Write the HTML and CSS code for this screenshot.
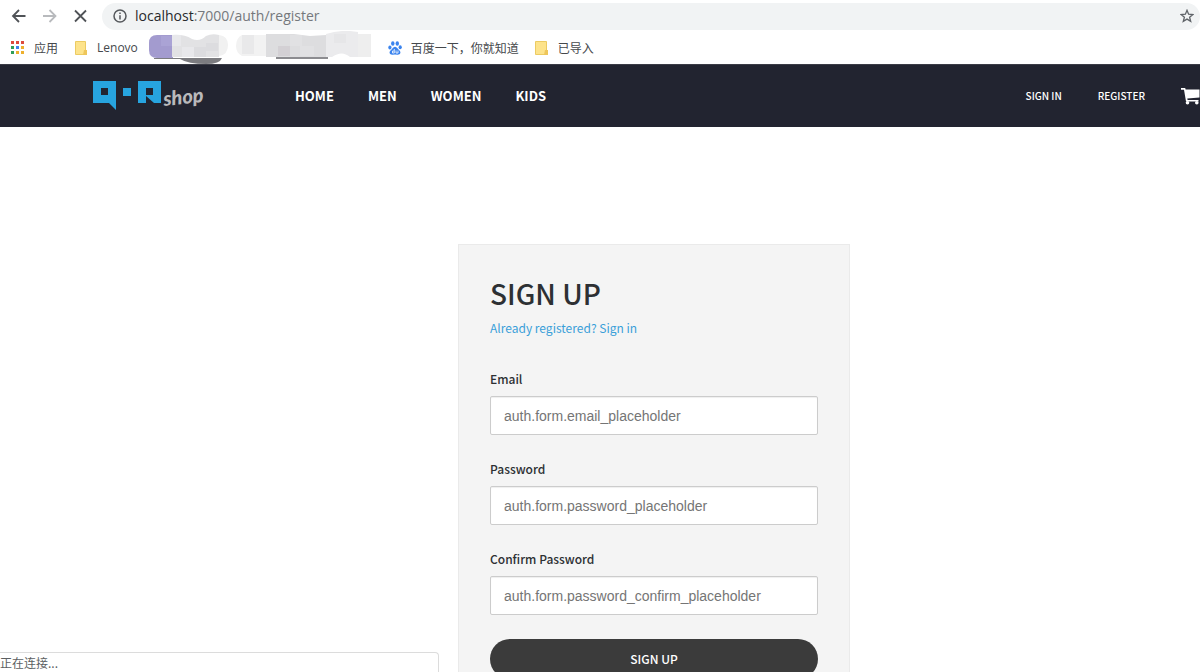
FILE: index.html
```html
<!DOCTYPE html>
<html lang="en">
<head>
  <meta charset="UTF-8">
  <meta content="width=device-width, initial-scale=1.0" name="viewport">
  <title>Sign up</title>
  <link rel="stylesheet" href="styles.css">
</head>
<body>
<div class="browser">
  <div class="toolbar">
    <button type="button" class="tool" aria-label="Back">
      <svg width="16" height="16" viewBox="0 0 16 16" fill="none" stroke="#505357" stroke-width="1.800"><path d="M14.500 8H2M8 2L2 8L8 14"/></svg>
    </button>
    <button type="button" class="tool" aria-label="Forward">
      <svg width="16" height="16" viewBox="0 0 16 16" fill="none" stroke="#b8babd" stroke-width="1.800"><path d="M1 8H13.500M7.500 2L13.500 8L7.500 14"/></svg>
    </button>
    <button type="button" class="tool" aria-label="Stop">
      <svg width="16" height="16" viewBox="0 0 16 16" fill="none" stroke="#505357" stroke-width="1.800"><path d="M2 2.500L13 13.500M13 2.500L2 13.500"/></svg>
    </button>
    <div class="address">
      <svg width="14" height="14" viewBox="0 0 14 14" fill="none" stroke="#55585c" stroke-width="1.500"><circle cx="7" cy="7" r="6"/><path d="M7 6.200V10.500M7 3.500V5"/></svg>
      <span class="url"><b>localhost</b>:7000/auth/register</span>
      <svg class="star" width="14" height="14" viewBox="0 0 14 14" fill="none" stroke="#5f6368" stroke-width="1.300"><path d="M7 1.300L8.600 5.200L12.900 5.500L9.600 8.200L10.700 12.400L7 10.100L3.300 12.400L4.400 8.200L1.100 5.500L5.400 5.200Z"/></svg>
    </div>
  </div>
  <div class="bookmarks">
    <a class="bookmark" href="#">
      <svg width="14" height="14" viewBox="0 0 14 14">
        <path fill="#dd4b3e" d="M0 0h3v3H0zM5 0h3v3H5zM10 0h3v3h-3z"/>
        <path fill="#2f9e58" d="M0 5h3v3H0zM0 10h3v3H0z"/>
        <path fill="#3f83ee" d="M5 5h3v3H5z"/>
        <path fill="#eeb02d" d="M10 5h3v3h-3zM5 10h3v3H5zM10 10h3v3h-3z"/>
      </svg>
      应用
    </a>
    <a class="bookmark" href="#">
      <svg width="14" height="14" viewBox="0 0 14 14"><path fill="#fde38b" stroke="#eccb62" d="M1.500 .5H11.500V9.500H12.500V13.500H1.500Z"/><path fill="#eec65a" d="M10 9h3v5H9z"/></svg>
      <span class="latin">Lenovo</span>
    </a>
    <svg class="mosaic" width="224" height="34" viewBox="148 33 224 34">
      <path fill="#7c7c80" d="M154 60H222Q220 66 206 66Q188 66 180 61H154Z"/>
      <path fill="#a39bcf" d="M157 37H173V60H157Q149 60 149 52V45Q149 37 157 37Z"/>
      <path fill="#aaa3d5" d="M161 38h11v10h-11z"/>
      <path fill="#e2e2e4" d="M172 37Q184 36 192 41Q200 44 206 38Q212 35 219 37V59H172Z"/>
      <path fill="#e8e8eb" d="M172 37h9v11h-9zM182 49h12v10h-12z"/>
      <path fill="#dcdcdf" d="M194 49h12v10h-12zM206 45h12v8h-12z"/>
      <path fill="#f1f1f1" d="M219 37Q228 38 228 47Q228 57 219 58Z"/>
      <path fill="#8c8c90" d="M276 58H328V61H276Z"/>
      <path fill="#f2f2f2" d="M242 37H266V58H242Q236 55 236 48Q236 40 242 37Z"/>
      <path fill="#e9e9ea" d="M242 37h12v11h-12zM242 48h12v8h-12z"/>
      <path fill="#dddddf" d="M266 36H294L310 38L326 37V59H266Z"/>
      <path fill="#d3d0d4" d="M278 48h12v10h-12z"/>
      <path fill="#e1e1e3" d="M290 37h12v11h-12zM300 48h14v10h-14z"/>
      <path fill="#ebebed" d="M326 36Q342 31 358 34V59H350Q342 52 332 59H326Z"/>
      <path fill="#e6e6e8" d="M334 36h12v9h-12z"/>
      <path fill="#eeeeee" d="M358 36h13v23h-13z"/>
    </svg>
    <a class="bookmark" href="#">
      <svg width="14" height="14" viewBox="0 0 14 14" fill="#3b84ee">
        <ellipse cx="4.800" cy="2.500" rx="1.700" ry="2.200"/><ellipse cx="9.300" cy="2.500" rx="1.700" ry="2.200"/>
        <ellipse cx="1.900" cy="6.400" rx="1.600" ry="2"/><ellipse cx="12.200" cy="6.200" rx="1.600" ry="2"/>
        <path d="M7 5.700C9 5.700 9.500 8 11.500 9.500C13.500 11.500 12 14 9.500 13.700Q7 13.200 4.500 13.700C2 14 .5 11.500 2.500 9.500C4.500 8 5 5.700 7 5.700Z"/>
        <path fill="none" stroke="#fff" stroke-width=".8" d="M6.300 8V12H4.500V10H6M8 9.500V12H10V9.500"/>
      </svg>
      百度一下，你就知道
    </a>
    <a class="bookmark" href="#">
      <svg width="14" height="14" viewBox="0 0 14 14"><path fill="#fde38b" stroke="#eccb62" d="M.5 .5H11.500V9.500H12.500V13.500H.5Z"/><path fill="#eec65a" d="M10 9h3v5H9z"/></svg>
      已导入
    </a>
  </div>
</div>

<header class="site-header">
  <a class="logo" href="#">
    <svg width="68" height="29" viewBox="0 0 68 29" fill="#27a4df" fill-rule="evenodd">
      <path d="M0 0H23V29L16 22H0ZM8 7V14H15V7Z"/>
      <path d="M30 7H38V15H30Z"/>
      <path d="M45 0H68V22H61L53 15V22H45ZM53 7V14H60V7Z"/>
    </svg>
    <span class="logo-name">shop</span>
  </a>
  <nav class="main-nav">
    <a href="#">HOME</a>
    <a href="#">MEN</a>
    <a href="#">WOMEN</a>
    <a href="#">KIDS</a>
  </nav>
  <nav class="user-nav">
    <a href="#">SIGN IN</a>
    <a href="#">REGISTER</a>
    <a class="cart" href="#" aria-label="Cart">
      <svg width="19" height="17" viewBox="0 0 19 17" fill="#fff"><path d="M0 0H4.200L4.600 1.500H18.500V9.500L6.300 10.500L6.600 12H17.500V13.500H5L3 1.800H0Z"/><circle cx="6.500" cy="14.800" r="1.800"/><circle cx="15.800" cy="14.800" r="1.800"/></svg>
    </a>
  </nav>
</header>

<main class="page">
  <form class="card">
    <h1>SIGN UP</h1>
    <a class="signin-link" href="#">Already registered? Sign in</a>

    <div class="field">
      <label for="email">Email</label>
      <input id="email" type="email" placeholder="auth.form.email_placeholder">
    </div>
    <div class="field">
      <label for="password">Password</label>
      <input id="password" type="password" placeholder="auth.form.password_placeholder">
    </div>
    <div class="field">
      <label for="confirm">Confirm Password</label>
      <input id="confirm" type="password" placeholder="auth.form.password_confirm_placeholder">
    </div>

    <button class="submit" type="submit">SIGN UP</button>
  </form>
</main>

<div class="status">正在连接...</div>
</body>
</html>
```
FILE: styles.css
```css
* {
  box-sizing: border-box;
}

body {
  background: #fff;
  color: #2d3033;
  font-family: "Noto Sans CJK SC", "Open Sans", sans-serif;
  margin: 0;
}

a {
  color: inherit;
  text-decoration: none;
}

svg {
  display: block;
  flex: none;
}

/* browser bars */
.toolbar {
  align-items: center;
  display: flex;
  gap: 15px;
  height: 32px;
  padding-left: 11px;
}

.tool {
  background: none;
  border: none;
  height: 16px;
  padding: 0;
  width: 16px;
}

.address {
  align-items: center;
  background: #f1f3f4;
  border-radius: 14px;
  display: flex;
  flex: 1;
  gap: 8px;
  height: 27px;
  margin-left: -2px;
  padding: 0 6px 0 11px;
}

.url {
  color: #75787c;
  flex: 1;
  font: 14px/20px "Open Sans", sans-serif;
}

.url b {
  color: #28292c;
  font-weight: 400;
}

.bookmarks {
  align-items: center;
  color: #45484c;
  display: flex;
  font-size: 12px;
  gap: 16px;
  height: 32px;
  line-height: 18px;
  padding-left: 11px;
}

.bookmark {
  align-items: center;
  display: flex;
  gap: 9px;
}

.latin {
  font-family: "Open Sans", sans-serif;
}

.mosaic {
  margin-left: -6px;
}

/* shop header */
.site-header {
  align-items: center;
  background: #222430;
  border-top: 1px solid #3b3c46;
  color: #fff;
  display: flex;
  height: 63px;
  padding-left: 93px;
}

.logo {
  display: flex;
  gap: 2px;
  width: 202px;
}

.logo-name {
  color: #b9b9bb;
  font: italic 900 20px/30px Lato, cursive;
  transform: rotate(-6deg);
}

.main-nav {
  display: flex;
  flex: 1;
  font-size: 13px;
  font-weight: 700;
  gap: 34px;
  line-height: 20px;
}

.user-nav {
  align-items: center;
  display: flex;
  font-size: 10px;
  font-weight: 500;
  gap: 36px;
  line-height: 20px;
}

/* sign up form */
.page {
  display: flex;
  justify-content: center;
  padding: 117px 0 60px 108px;
}

.card {
  background: #f4f4f4;
  border: 1px solid #eaeaea;
  padding: 28px 31px 40px;
  width: 392px;
}

h1 {
  font-size: 28px;
  font-weight: 500;
  line-height: 40px;
  margin: 0;
}

.signin-link {
  color: #3a9fd9;
  display: block;
  font-size: 12px;
  line-height: 20px;
  margin: 5px 0 31px;
}

.field {
  margin-bottom: 24px;
}

.field label {
  display: block;
  font-size: 12px;
  font-weight: 500;
  line-height: 20px;
  margin-bottom: 7px;
}

.field input {
  background: #fff;
  border: 1px solid #ccc;
  border-radius: 2px;
  box-shadow: inset 0 1px 1px #0001;
  display: block;
  font: 14px/20px "Liberation Sans", sans-serif;
  height: 39px;
  padding: 0 13px;
  width: 100%;
}

.field input::placeholder {
  color: #757575;
}

.submit {
  background: #3b3b3b;
  border: none;
  border-radius: 20px;
  color: #fff;
  display: block;
  font: 500 12px/20px "Noto Sans CJK SC", sans-serif;
  height: 40px;
  width: 100%;
}

/* loading status in the window's corner */
.status {
  background: #fff;
  border: 1px solid #dcdcdc;
  border-width: 1px 1px 0 0;
  border-radius: 0 4px 0 0;
  bottom: 0;
  color: #5c5f62;
  font-size: 12px;
  height: 20px;
  left: 0;
  line-height: 20px;
  position: fixed;
  width: 439px;
}
```
